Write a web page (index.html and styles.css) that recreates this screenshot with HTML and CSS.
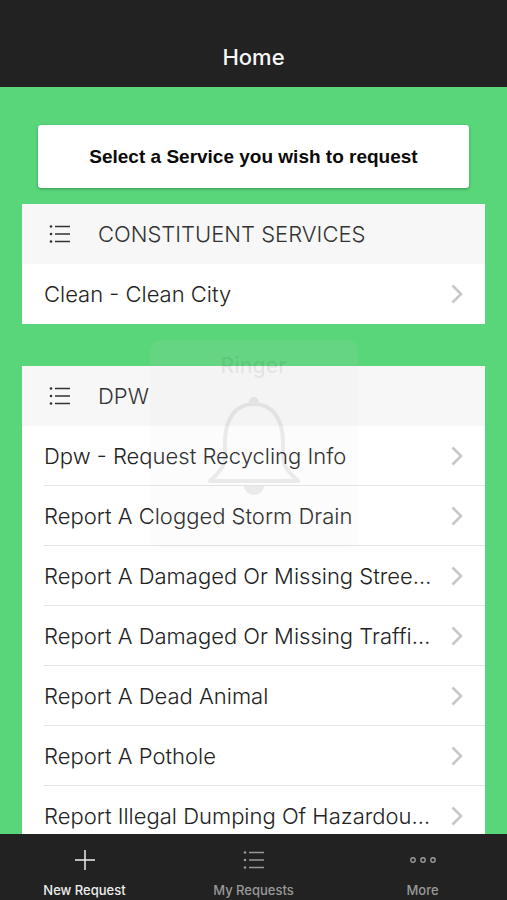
FILE: index.html
```
<!DOCTYPE html>
<html lang="en">
<head>
  <meta charset="UTF-8">
  <meta name="viewport" content="width=device-width, initial-scale=1">
  <title>Home</title>
  <link rel="stylesheet" href="styles.css">
</head>
<body>
  <!-- Shared icons -->
  <svg class="sprite" aria-hidden="true">
    <symbol id="icon-list" viewBox="0 0 22 20">
      <path d="M6 2.5H21M6 10H21M6 17.5H21" fill="none" stroke="currentColor" stroke-width="1.4"/>
      <circle cx="2" cy="2.5" r="1.3" fill="currentColor"/>
      <circle cx="2" cy="10" r="1.3" fill="currentColor"/>
      <circle cx="2" cy="17.5" r="1.3" fill="currentColor"/>
    </symbol>
    <symbol id="icon-chevron" viewBox="0 0 12 20">
      <path d="M1.5 1.5L10 10L1.5 18.5" fill="none" stroke="currentColor" stroke-width="2.6"/>
    </symbol>
  </svg>

  <header class="navbar">
    <h1 class="navbar-title">Home</h1>
  </header>

  <main class="content">
    <p class="prompt">Select a Service you wish to request</p>

    <section class="group">
      <h2 class="group-title"><svg class="icon-list"><use href="#icon-list"/></svg>CONSTITUENT SERVICES</h2>
      <ul class="rows">
        <li class="row"><a class="row-link" href="#"><span class="row-text">Clean - Clean City</span><svg class="chevron"><use href="#icon-chevron"/></svg></a></li>
      </ul>
    </section>

    <section class="group">
      <h2 class="group-title"><svg class="icon-list"><use href="#icon-list"/></svg>DPW</h2>
      <ul class="rows">
        <li class="row"><a class="row-link" href="#"><span class="row-text">Dpw - Request Recycling Info</span><svg class="chevron"><use href="#icon-chevron"/></svg></a></li>
        <li class="row"><a class="row-link" href="#"><span class="row-text">Report A Clogged Storm Drain</span><svg class="chevron"><use href="#icon-chevron"/></svg></a></li>
        <li class="row"><a class="row-link" href="#"><span class="row-text">Report A Damaged Or Missing Stree…</span><svg class="chevron"><use href="#icon-chevron"/></svg></a></li>
        <li class="row"><a class="row-link" href="#"><span class="row-text">Report A Damaged Or Missing Traffi…</span><svg class="chevron"><use href="#icon-chevron"/></svg></a></li>
        <li class="row"><a class="row-link" href="#"><span class="row-text">Report A Dead Animal</span><svg class="chevron"><use href="#icon-chevron"/></svg></a></li>
        <li class="row"><a class="row-link" href="#"><span class="row-text">Report A Pothole</span><svg class="chevron"><use href="#icon-chevron"/></svg></a></li>
        <li class="row"><a class="row-link" href="#"><span class="row-text">Report Illegal Dumping Of Hazardou…</span><svg class="chevron"><use href="#icon-chevron"/></svg></a></li>
      </ul>
    </section>
  </main>

  <!-- Ringer overlay, almost faded out -->
  <div class="ringer">
    <span class="ringer-label">Ringer</span>
    <svg class="ringer-bell" viewBox="0 0 94 100">
      <path d="M18 60V46C18 24 28 8 47 8S76 24 76 46V60C76 72 84 78 91 85H3C10 78 18 72 18 60Z" fill="none" stroke="currentColor" stroke-width="4" stroke-linejoin="round"/>
      <path d="M42 6a5 5 0 0 1 10 0zM37 90H57a10 9 0 0 1-20 0z" fill="currentColor"/>
    </svg>
  </div>

  <nav class="tabbar">
    <a class="tab tab-active" href="#">
      <svg class="tab-icon" viewBox="0 0 24 24"><path d="M12 2V22M2 12H22" fill="none" stroke="currentColor" stroke-width="1.5"/></svg>
      New Request
    </a>
    <a class="tab" href="#">
      <svg class="tab-icon" viewBox="-1 -2 24 24"><use href="#icon-list" width="22" height="20"/></svg>
      My Requests
    </a>
    <a class="tab" href="#">
      <svg class="tab-icon tab-icon-wide" viewBox="0 0 28 24">
        <g fill="none" stroke="currentColor" stroke-width="1.4">
          <circle cx="4" cy="12" r="2.2"/>
          <circle cx="14" cy="12" r="2.2"/>
          <circle cx="24" cy="12" r="2.2"/>
        </g>
      </svg>
      More
    </a>
  </nav>
</body>
</html>
```
FILE: styles.css
```
* {
  box-sizing: border-box;
}

body {
  margin: 0;
  height: 100vh;
  display: flex;
  flex-direction: column;
  position: relative;
  background: #59d57a;
  font-family: Inter, "Liberation Sans", sans-serif;
  color: #222;
}

a {
  color: inherit;
  text-decoration: none;
}

.sprite {
  position: absolute;
  width: 0;
  height: 0;
}

/* Top bar */
.navbar {
  flex: none;
  padding: 42px 16px 15px;
  background: #222;
  text-align: center;
}

.navbar-title {
  margin: 0;
  font-size: 22px;
  font-weight: 500;
  line-height: 30px;
  color: #f7f7f7;
}

/* Scrolling list */
.content {
  flex: 1;
  min-height: 0;
  padding: 38px 22px 0;
  overflow-y: auto;
  scrollbar-width: none;
}

.prompt {
  margin: 0 16px 16px;
  padding: 20px 16px;
  background: #fff;
  border-radius: 3px;
  box-shadow: 0 1px 3px rgba(0, 0, 0, 0.3);
  font-family: "Liberation Sans", Arial, sans-serif;
  font-size: 19px;
  font-weight: 700;
  line-height: 23px;
  color: #0a0a0a;
  text-align: center;
}

.group {
  margin-bottom: 42px;
  background: #fff;
}

.group-title {
  display: flex;
  align-items: center;
  gap: 27px;
  height: 60px;
  margin: 0;
  padding-left: 27px;
  background: #f7f7f7;
  font-size: 22px;
  font-weight: 300;
  color: #333;
}

.icon-list {
  width: 22px;
  height: 20px;
}

.rows {
  margin: 0;
  padding: 0 0 0 22px;
  list-style: none;
}

.row {
  height: 60px;
  border-bottom: 1px solid #e4e4e4;
}

.row:last-child {
  border-bottom: none;
}

.row-link {
  display: flex;
  align-items: center;
  justify-content: space-between;
  height: 59px;
  padding-right: 22px;
  font-size: 22px;
  font-weight: 300;
}

.row-text {
  overflow: hidden;
  white-space: nowrap;
  text-overflow: ellipsis;
}

.chevron {
  flex: none;
  width: 12px;
  height: 20px;
  color: #c7c7cc;
}

/* Ringer overlay */
.ringer {
  position: absolute;
  top: 340px;
  left: 50%;
  display: flex;
  flex-direction: column;
  align-items: center;
  gap: 16px;
  width: 208px;
  height: 208px;
  margin-left: -104px;
  padding-top: 12px;
  border-radius: 10px;
  background: rgba(220, 220, 220, 0.09);
  color: rgba(0, 0, 0, 0.07);
  pointer-events: none;
}

.ringer-label {
  font-size: 21px;
  font-weight: 600;
  line-height: 28px;
}

.ringer-bell {
  width: 94px;
  height: 100px;
}

/* Bottom tabs */
.tabbar {
  flex: none;
  display: flex;
  height: 66px;
  background: #222;
}

.tab {
  flex: 1;
  display: flex;
  flex-direction: column;
  align-items: center;
  gap: 9px;
  padding-top: 14px;
  font-size: 13px;
  font-weight: 500;
  line-height: 18px;
  color: #999;
}

.tab-active {
  color: #eee;
}

.tab-icon {
  width: 24px;
  height: 24px;
}

.tab-icon-wide {
  width: 28px;
}
```
